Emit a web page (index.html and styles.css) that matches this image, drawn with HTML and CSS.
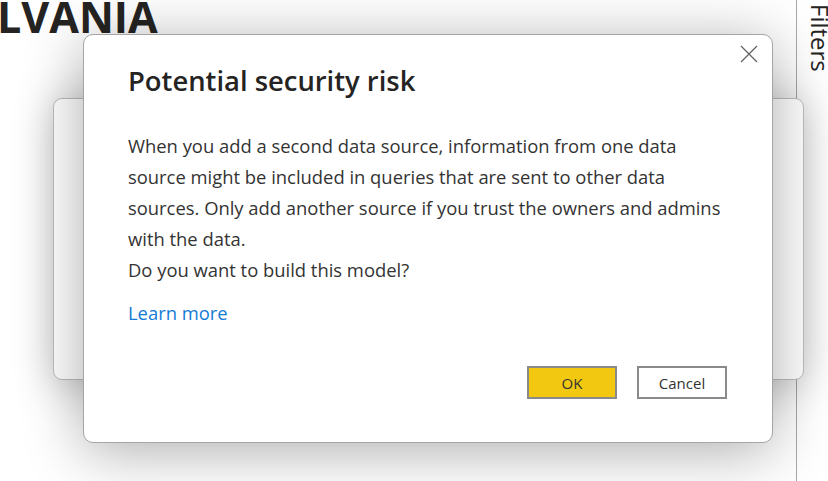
FILE: index.html
```html
<!DOCTYPE html>
<html>
<head>
<meta charset="utf-8">
<link rel="stylesheet" href="styles.css">
</head>
<body>
<div class="app">
  <main class="canvas">
    <h1 class="page-title">LVANIA</h1>
  </main>
  <aside class="filters-pane">
    <span class="filters-label">Filters</span>
  </aside>
</div>

<div class="back-dialog"></div>

<div class="dialog" role="dialog">
  <button class="close" aria-label="Close">
    <svg width="18" height="18" viewBox="0 0 18 18"><path d="M1 1 L17 17 M17 1 L1 17" stroke="#606060" stroke-width="1.2" fill="none"/></svg>
  </button>
  <h2 class="dialog-title">Potential security risk</h2>
  <p class="dialog-text">When you add a second data source, information from one data<br>source might be included in queries that are sent to other data<br>sources. Only add another source if you trust the owners and admins<br>with the data.</p>
  <p class="dialog-text">Do you want to build this model?</p>
  <a class="learn-more" href="#">Learn more</a>
  <div class="actions">
    <button class="btn btn-primary">OK</button>
    <button class="btn">Cancel</button>
  </div>
</div>
</body>
</html>
```
FILE: styles.css
```css
html, body {
  margin: 0;
  padding: 0;
  width: 828px;
  height: 481px;
  overflow: hidden;
  background: #ffffff;
  font-family: "Open Sans", "Noto Sans", sans-serif;
  color: #252423;
}
.app {
  display: flex;
  height: 481px;
}
.canvas {
  flex: 1;
  overflow: hidden;
}
.page-title {
  margin: -8px 0 0 -3px;
  font-size: 43px;
  font-weight: 700;
  letter-spacing: 0;
  color: #252423;
  line-height: 50px;
  white-space: nowrap;
}
.filters-pane {
  width: 31px;
  border-left: 1px solid #a8a8a8;
  display: flex;
  justify-content: flex-end;
}
.filters-label {
  writing-mode: vertical-rl;
  font-size: 24px;
  color: #252423;
  margin-top: 4px;
  margin-right: -6px;
  line-height: 28px;
}
.back-dialog {
  position: absolute;
  left: 53px;
  top: 98px;
  width: 749px;
  height: 280px;
  background: #fff;
  border: 1.5px solid #bdbdbd;
  border-radius: 9px;
  box-shadow: 0 4px 40px rgba(0,0,0,0.25);
}
.dialog {
  position: absolute;
  left: 83px;
  top: 34px;
  width: 599px;
  height: 385px;
  padding: 22px 45px 0 44px;
  background: #fff;
  border: 1.5px solid #a5a5a5;
  border-radius: 10px;
  box-shadow: 0 8px 60px rgba(0,0,0,0.33);
  display: flex;
  flex-direction: column;
}
.close {
  position: absolute;
  top: 10px;
  right: 14px;
  background: none;
  border: none;
  padding: 0;
  width: 18px;
  height: 18px;
}
.dialog-title {
  margin: 0 0 25px 0;
  font-size: 27.4px;
  font-weight: 600;
  line-height: 48px;
  color: #252423;
}
.dialog-text {
  margin: 0;
  font-size: 18.4px;
  line-height: 31px;
  color: #333333;
  white-space: nowrap;
}
.learn-more {
  margin-top: 14px;
  font-size: 18.4px;
  line-height: 28px;
  color: #127bd6;
  text-decoration: none;
  align-self: flex-start;
}
.actions {
  margin-top: 39px;
  display: flex;
  justify-content: flex-end;
  gap: 20px;
}
.btn {
  width: 90px;
  height: 33px;
  border: 2px solid #8a8a8a;
  background: #fff;
  font-family: "Open Sans", "Noto Sans", sans-serif;
  font-size: 15px;
  color: #333;
  padding: 0;
}
.btn-primary {
  background: #f2c811;
}
```
